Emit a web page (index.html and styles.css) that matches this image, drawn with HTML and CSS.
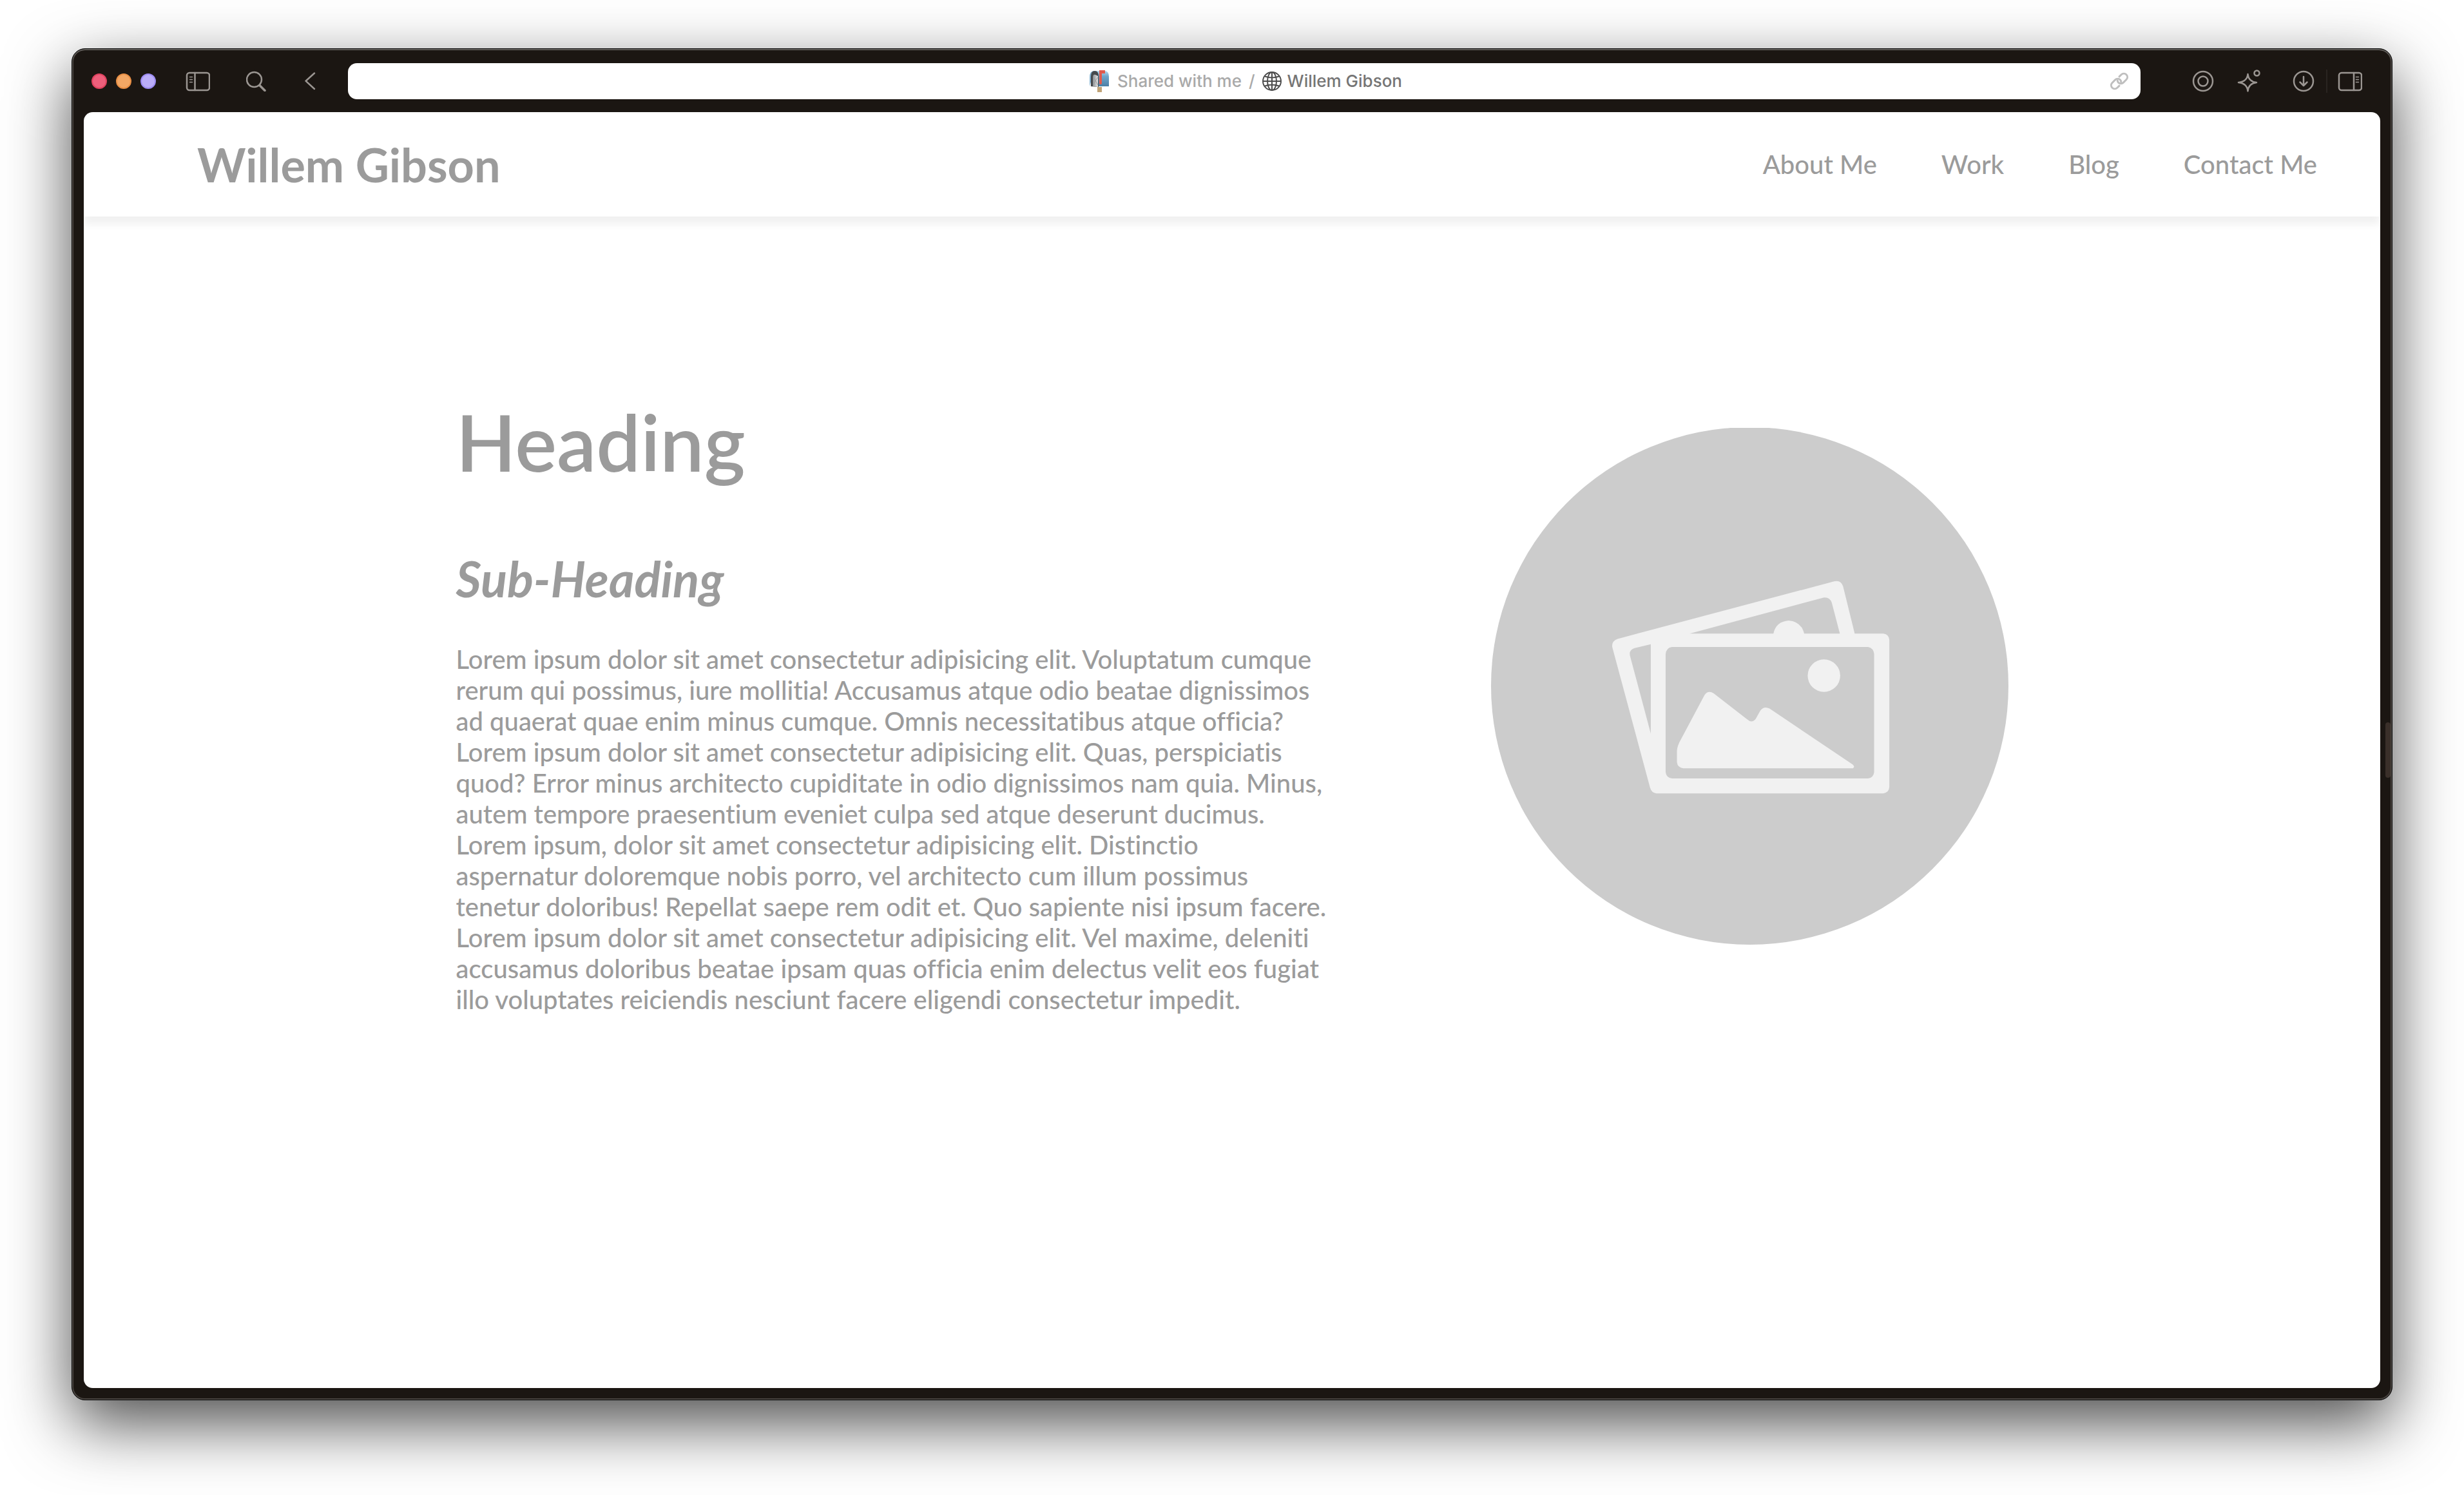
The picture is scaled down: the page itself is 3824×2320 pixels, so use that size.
FILE: index.html
```html
<!DOCTYPE html>
<html lang="en">
<head>
<meta charset="utf-8">
<meta name="viewport" content="width=device-width, initial-scale=1">
<title>Willem Gibson</title>
<link rel="stylesheet" href="styles.css">
</head>
<body>
<div class="window">
  <div class="toolbar">
    <div class="lights">
      <button class="light light-close" aria-label="Close"></button>
      <button class="light light-minimize" aria-label="Minimize"></button>
      <button class="light light-zoom" aria-label="Zoom"></button>
    </div>
    <div class="tools tools-left">
      <button class="tool" aria-label="Sidebar">
        <svg width="38" height="32" viewBox="0 0 38 32"><rect x="2" y="3" width="35" height="27" rx="4"/><path d="M14.500 3v27"/><path class="thin" d="M6.500 9.500h4M6.500 13.500h4M6.500 17.500h4"/></svg>
      </button>
      <button class="tool" aria-label="Search">
        <svg width="32" height="32" viewBox="0 0 32 32"><circle cx="12.500" cy="13.500" r="11.500"/><path class="thick" d="M21 22.500l8 8"/></svg>
      </button>
      <button class="tool" aria-label="Back">
        <svg width="32" height="32" viewBox="0 0 32 32"><path d="M18 3.500L4.500 15.700L18 28"/></svg>
      </button>
    </div>
    <div class="address">
      <div class="crumbs">
        <svg class="mailbox" width="32" height="36" viewBox="0 0 32 36">
          <defs>
            <linearGradient id="box" x1="0" y1="0" x2="0" y2="1"><stop offset="0" stop-color="#b5d8ee"/><stop offset=".35" stop-color="#6fa6cb"/><stop offset="1" stop-color="#4a7fa5"/></linearGradient>
            <linearGradient id="door" x1="0" y1="0" x2="1" y2="0"><stop offset="0" stop-color="#8d9194"/><stop offset="1" stop-color="#e3e5e6"/></linearGradient>
          </defs>
          <path d="M13 27h7v8h-7z" fill="#c0a377"/>
          <path d="M9 2h15q7 0 7 9v15H14z" fill="url(#box)"/>
          <path d="M1 26V12Q1 2 8 2" fill="#7fb0d0"/>
          <path d="M3 26V11q0-9 6-9t6 9v16z" fill="#45494c"/>
          <path d="M6 26V12q0-5 4-4l4 2v17z" fill="url(#door)"/>
          <path d="M7 11l3 6l4-5M7 24l3-7l4 7" fill="none" stroke="#9b9ea0"/>
          <path d="M16 1h9v5h-5v16q-2 2-4 0z" fill="#e05a4d"/>
        </svg>
        <a class="crumb" href="#">Shared with me</a>
        <span class="slash">/</span>
        <svg class="globe" width="30" height="34" viewBox="0 0 30 34"><circle cx="15" cy="17" r="14"/><ellipse cx="15" cy="17" rx="7" ry="14"/><path d="M15 3v28M1 17h28M4 9.500q11 4 22 0M4 24.500q11-4 22 0"/></svg>
        <a class="crumb crumb-current" href="#">Willem Gibson</a>
      </div>
      <button class="tool copy" aria-label="Copy link">
        <svg width="30" height="30" viewBox="0 0 30 30"><g transform="rotate(-45 15 15)"><path d="M10 20H5.500a5.500 5.500 0 0 1 0-11H12a5.500 5.500 0 0 1 5.500 5.500q0 2-1.500 3.500"/><path d="M20 10H24.500a5.500 5.500 0 0 1 0 11H18a5.500 5.500 0 0 1-5.500-5.500q0-2 1.500-3.500"/></g></svg>
      </button>
    </div>
    <div class="tools tools-right">
      <button class="tool" aria-label="Focus">
        <svg width="34" height="34" viewBox="0 0 34 34"><circle cx="17" cy="17" r="15"/><circle cx="17" cy="17" r="7.500"/></svg>
      </button>
      <button class="tool assist" aria-label="Assistant">
        <svg width="36" height="36" viewBox="0 0 36 36"><path d="M16.500 7q1 11.500 13.500 13q-12.500 1.500-13.500 13.500q-1-12-14.500-13.500q13.500-1.500 14.500-13z"/><circle cx="30.500" cy="5.500" r="4"/></svg>
      </button>
      <button class="tool" aria-label="Downloads">
        <svg width="34" height="34" viewBox="0 0 34 34"><circle cx="17" cy="17" r="15"/><path d="M17 10v14M11.500 18.500L17 24l5.500-5.500"/></svg>
      </button>
      <span class="divider"></span>
      <button class="tool" aria-label="Split view">
        <svg width="38" height="32" viewBox="0 0 38 32"><rect x="2" y="3" width="35" height="27" rx="4"/><path d="M25 3v27"/><path class="thin" d="M28.500 9.500h4M28.500 13.500h4M28.500 17.500h4"/></svg>
      </button>
    </div>
  </div>

  <div class="page">
    <header class="site-header">
      <h1 class="site-name">Willem Gibson</h1>
      <nav class="site-nav">
        <a href="#about">About Me</a>
        <a href="#work">Work</a>
        <a href="#blog">Blog</a>
        <a href="#contact">Contact Me</a>
      </nav>
    </header>
    <main class="hero">
      <section class="intro">
        <h2 class="heading">Heading</h2>
        <h3 class="sub-heading">Sub-Heading</h3>
        <p class="copy-text">Lorem ipsum dolor sit amet consectetur adipisicing elit. Voluptatum cumque rerum qui possimus, iure mollitia! Accusamus atque odio beatae dignissimos ad quaerat quae enim minus cumque. Omnis necessitatibus atque officia? Lorem ipsum dolor sit amet consectetur adipisicing elit. Quas, perspiciatis quod? Error minus architecto cupiditate in odio dignissimos nam quia. Minus, autem tempore praesentium eveniet culpa sed atque deserunt ducimus. Lorem ipsum, dolor sit amet consectetur adipisicing elit. Distinctio<br> aspernatur doloremque nobis porro, vel architecto cum illum possimus<br> tenetur doloribus! Repellat saepe rem odit et. Quo sapiente nisi ipsum facere. Lorem ipsum dolor sit amet consectetur adipisicing elit. Vel maxime, deleniti accusamus doloribus beatae ipsam quas officia enim delectus velit eos fugiat illo voluptates reiciendis nesciunt facere eligendi consectetur impedit.</p>
      </section>
      <svg class="portrait" viewBox="60 44 1464 1462" role="img" aria-label="Placeholder picture">
        <circle cx="792" cy="774" r="732" fill="#ccc"/>
        <g fill="#f1f1f1">
          <path fill-rule="evenodd" d="M418 641L1032 478Q1050 474 1056 492L1089 626H1170Q1186 628 1187 644V1060Q1186 1076 1170 1078H528Q514 1077 510 1062L403 664Q401 647 418 641zM466 667Q450 672 453 688L512 909V656zM622 626H859Q866 592 902 589Q938 592 946 626H1047L1024 538Q1018 522 1002 524zM572 664Q556 666 554 684V1018Q556 1034 572 1036H1127Q1142 1034 1144 1018V684Q1142 667 1127 664z"/>
          <circle cx="1002" cy="745" r="46"/>
          <path d="M586 958Q587 943 597 926L664 800Q674 785 690 795L784 868Q798 881 809 867L822 844Q832 830 848 838L1083 996Q1091 1003 1084 1007H604Q588 1006 586 990z"/>
        </g>
      </svg>
    </main>
  </div>
  <span class="grip"></span>
</div>
</body>
</html>
```
FILE: styles.css
```css
* { box-sizing: border-box; }

body {
  display: flex;
  min-height: 100vh;
  margin: 0;
  padding: 75px 111px 147px;
  background: #fff;
  color: #9b9b9b;
  font-family: Lato, sans-serif;
  font-variant-ligatures: none;
}

h1, h2, h3, p { margin: 0; }
a { color: inherit; text-decoration: none; }
button { padding: 0; border: 0; background: none; }

/* Browser window */
.window {
  position: relative;
  display: flex;
  flex: 1;
  flex-direction: column;
  min-width: 0;
  padding: 2px 18px 18px;
  border: 1px solid #050505;
  border-radius: 21px;
  background: #1b1612;
  box-shadow: inset 0 2px #5f5c58, inset 0 0 0 2px #4a4541, 0 36px 100px rgba(0, 0, 0, .7);
}

.toolbar {
  display: flex;
  align-items: center;
  height: 96px;
  padding: 0 28px 0 12px;
}

.lights { display: flex; gap: 14px; }
.light { width: 24px; height: 24px; border: 2px solid; border-radius: 50%; }
.light-close { border-color: #e0435f; background: #ed5f7b; }
.light-minimize { border-color: #e98f45; background: #f2a765; }
.light-zoom { border-color: #9d8bf3; background: #bbadf9; }

.tools { display: flex; align-items: center; }
.tools-left { gap: 56px; margin: 0 38px 0 46px; }
.tools-right { gap: 36px; margin-left: 80px; }
.assist { margin-right: 14px; }
.divider { width: 2px; height: 36px; margin: 0 -20px 0 -18px; background: #292420; }

.tool { display: flex; }
.tool svg {
  fill: none;
  stroke: #9b9692;
  stroke-width: 2.5;
  stroke-linecap: round;
  stroke-linejoin: round;
}
.tool .thin { stroke-width: 1.5; }
.tool .thick { stroke-width: 3.5; }

.address {
  display: flex;
  flex: 1;
  align-items: center;
  height: 56px;
  padding: 0 18px;
  border-radius: 14px;
  background: #fff;
}
.crumbs {
  display: flex;
  flex: 1;
  align-items: center;
  justify-content: center;
  padding-left: 34px;
  color: #a9a9a9;
  font: 500 26px/32px Inter, sans-serif;
}
.mailbox { margin-right: 12px; }
.slash { margin: 0 11px; }
.globe { margin-right: 9px; fill: none; stroke: #4c4c4c; stroke-width: 2; }
.crumb-current { color: #757575; }
.address .copy svg { stroke: #bfbfbf; stroke-width: 3; }

.grip {
  position: absolute;
  top: 50%;
  right: 2px;
  width: 8px;
  height: 86px;
  margin-top: -3px;
  border-radius: 4px;
  background: #3a2f29;
}

/* Website */
.page {
  flex: 1;
  overflow: hidden;
  border-radius: 14px;
  background: #fff;
}

.site-header {
  display: flex;
  align-items: center;
  justify-content: space-between;
  padding: 38px 98px 38px 176px;
  box-shadow: 0 12px 12px #f1f1f1;
}
.site-name { font-size: 72px; font-weight: 700; line-height: 86px; }
.site-nav { display: flex; gap: 100px; font-size: 40px; font-weight: 500; line-height: 48px; }

.hero {
  display: flex;
  align-items: flex-start;
  justify-content: space-between;
  max-width: 2409px;
  margin: 0 auto;
  padding: 277px 0 80px;
}
.intro { width: 57%; }
.heading { font-size: 122px; font-weight: 600; line-height: 144px; }
.sub-heading { margin: 98px 0 58px; font-size: 76px; font-style: italic; font-weight: 700; line-height: 86px; }
.copy-text { font-size: 40px; font-weight: 500; line-height: 48px; }
.portrait { width: calc(100% / 3); margin-top: 51px; }
```
